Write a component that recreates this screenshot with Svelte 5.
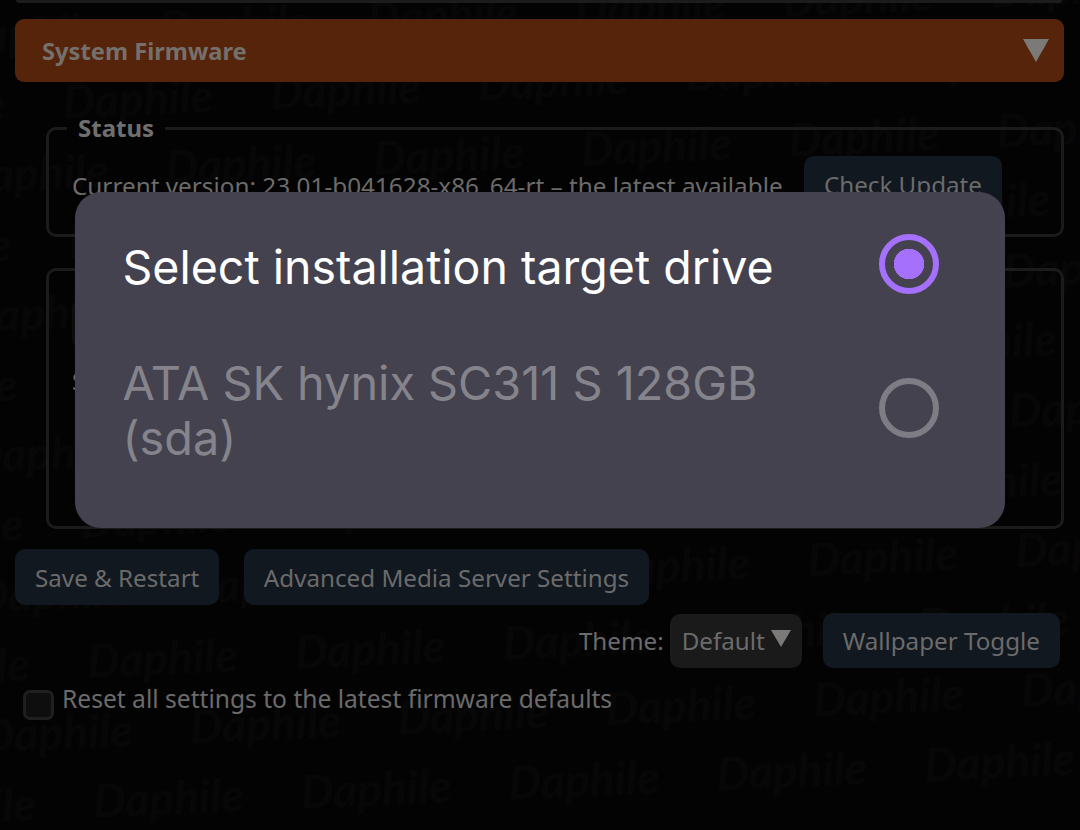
<script>
    const rows = [];
    for (let i = 0; i < 13; i++) {
        rows.push({ y: 9 + (i - 1) * 70, x: i % 2 ? -50 : -150 });
    }
    const tiles = Array(7).fill('Daphile');
</script>

<div class="page">
    <div class="wallpaper" aria-hidden="true">
        {#each rows as row}
            <div class="wp-row" style="left: {row.x}px; top: {row.y}px;">
                {#each tiles as t}<span>{t}</span>{/each}
            </div>
        {/each}
    </div>

    <div class="content">
        <div class="top-edge"></div>

        <div class="section-head">
            <span>System Firmware</span>
            <span class="arrow"></span>
        </div>

        <fieldset class="status">
            <legend>Status</legend>
            <div class="status-row">
                <span>Current version: 23.01-b041628-x86_64-rt – the latest available</span>
                <button>Check Update</button>
            </div>
        </fieldset>

        <fieldset class="install">
            <div class="hidden-input"></div>
            <p>Select installation target drive</p>
        </fieldset>

        <div class="actions">
            <button>Save &amp; Restart</button>
            <button>Advanced Media Server Settings</button>
        </div>

        <div class="theme-row">
            <span>Theme:</span>
            <div class="select">Default<span class="arrow small"></span></div>
            <button>Wallpaper Toggle</button>
        </div>

        <label class="reset">
            <span class="check"></span>
            Reset all settings to the latest firmware defaults
        </label>
    </div>

    <div class="dialog">
        <div class="option">
            <span class="title">Select installation target drive</span>
            <span class="radio on"></span>
        </div>
        <div class="option">
            <span class="title off">ATA SK hynix SC311 S 128GB (sda)</span>
            <span class="radio"></span>
        </div>
    </div>
</div>

<style>
    :global(body) {
        margin: 0;
        background: #040304;
    }

    .page {
        position: relative;
        width: 1080px;
        height: 830px;
        overflow: hidden;
        background: #040304;
        font-family: "Noto Sans", sans-serif;
        font-size: 24.2px;
        color: #6b6b6b;
    }

    .wallpaper {
        position: absolute;
        inset: 0;
        transform: rotate(-2.5deg);
        transform-origin: 0 0;
    }

    .wp-row {
        position: absolute;
        display: flex;
    }

    .wp-row span {
        width: 208px;
        font-family: Lato, sans-serif;
        font-weight: 700;
        font-style: italic;
        font-size: 46px;
        line-height: 50px;
        color: #080708;
    }

    .content {
        position: relative;
        padding: 0 16px 0 15px;
    }

    .top-edge {
        height: 3px;
        margin: 0 2px 16px 1px;
        background: #1c1c1c;
        border-radius: 0 0 6px 6px;
    }

    .section-head {
        display: flex;
        justify-content: space-between;
        align-items: center;
        height: 63px;
        padding: 0 15px 0 27px;
        border-radius: 9px;
        background: #55240a;
        font-size: 23.7px;
        font-weight: 700;
        color: #76706c;
    }

    .arrow {
        width: 0;
        height: 0;
        border-left: 13.5px solid transparent;
        border-right: 13.5px solid transparent;
        border-top: 23px solid #7c7a78;
    }

    .arrow.small {
        margin: 0 0 4px 1px;
        border-left-width: 10px;
        border-right-width: 10px;
        border-top-width: 17px;
    }

    fieldset {
        box-sizing: border-box;
        margin: 0 0 0 31px;
        padding: 0;
        border: 3px solid #1b1b1b;
        border-radius: 10px;
    }

    .status {
        margin-top: 30px;
        height: 125px;
        padding: 0 59px 0 23px;
    }

    legend {
        margin-left: -5px;
        padding: 0 11px;
        font-size: 24px;
        font-weight: 700;
        line-height: 32px;
        color: #6f6f6f;
    }

    .status-row {
        display: flex;
        justify-content: space-between;
        align-items: flex-start;
    }

    .status-row span {
        margin-top: 25px;
        font-size: 24.3px;
        white-space: nowrap;
    }

    .status-row button {
        margin-top: 12px;
        padding: 0 20px;
    }

    button {
        height: 56px;
        padding: 0 20px;
        border: 0;
        border-radius: 10px;
        background: #111820;
        font: inherit;
        color: #6b6b6b;
    }

    .install {
        height: 261px;
        margin-top: 31px;
        padding: 0 23px;
    }

    .hidden-input {
        width: 200px;
        height: 47px;
        margin-top: 29px;
        border-radius: 8px;
        background: #0d0d0d;
    }

    .install p {
        margin: 17px 0 0;
    }

    .actions {
        display: flex;
        gap: 25px;
        margin-top: 20px;
    }

    .actions button:last-child {
        padding: 0 19.5px;
    }

    .theme-row {
        display: flex;
        justify-content: flex-end;
        align-items: center;
        gap: 6px;
        margin: 8px 4px 0 0;
    }

    .theme-row button {
        height: 55px;
        margin-left: 15px;
    }

    .select {
        display: flex;
        align-items: center;
        justify-content: space-between;
        box-sizing: border-box;
        width: 132px;
        height: 54px;
        padding: 0 11px 0 12px;
        border-radius: 10px;
        background: #1a1a1a;
    }

    .reset {
        display: flex;
        align-items: flex-start;
        gap: 8px;
        margin: 14px 0 0 8px;
        font-size: 24.6px;
    }

    .check {
        width: 25px;
        height: 24px;
        margin-top: 8px;
        border: 3px solid #1f1f1f;
        border-radius: 7px;
        background: #0e0e0e;
    }

    .dialog {
        position: absolute;
        left: 75px;
        top: 192px;
        width: 930px;
        height: 336px;
        box-sizing: border-box;
        padding: 41px 66px 0 47.5px;
        border-radius: 26px;
        background: #44424e;
        font-family: Inter, sans-serif;
    }

    .option {
        display: flex;
        justify-content: space-between;
        align-items: center;
        gap: 100px;
    }

    .option + .option {
        margin-top: 55px;
    }

    .title {
        padding-top: 7px;
        font-size: 46.5px;
        line-height: 55px;
        color: #fff;
    }

    .title.off {
        padding-top: 6px;
        font-size: 46.8px;
        color: #85848c;
    }

    .radio {
        flex: none;
        box-sizing: border-box;
        width: 60px;
        height: 60px;
        border: 6px solid #7e7d85;
        border-radius: 50%;
    }

    .radio.on {
        border-color: #a571fc;
        background: radial-gradient(circle, #a571fc 15px, transparent 15.5px);
    }
</style>
